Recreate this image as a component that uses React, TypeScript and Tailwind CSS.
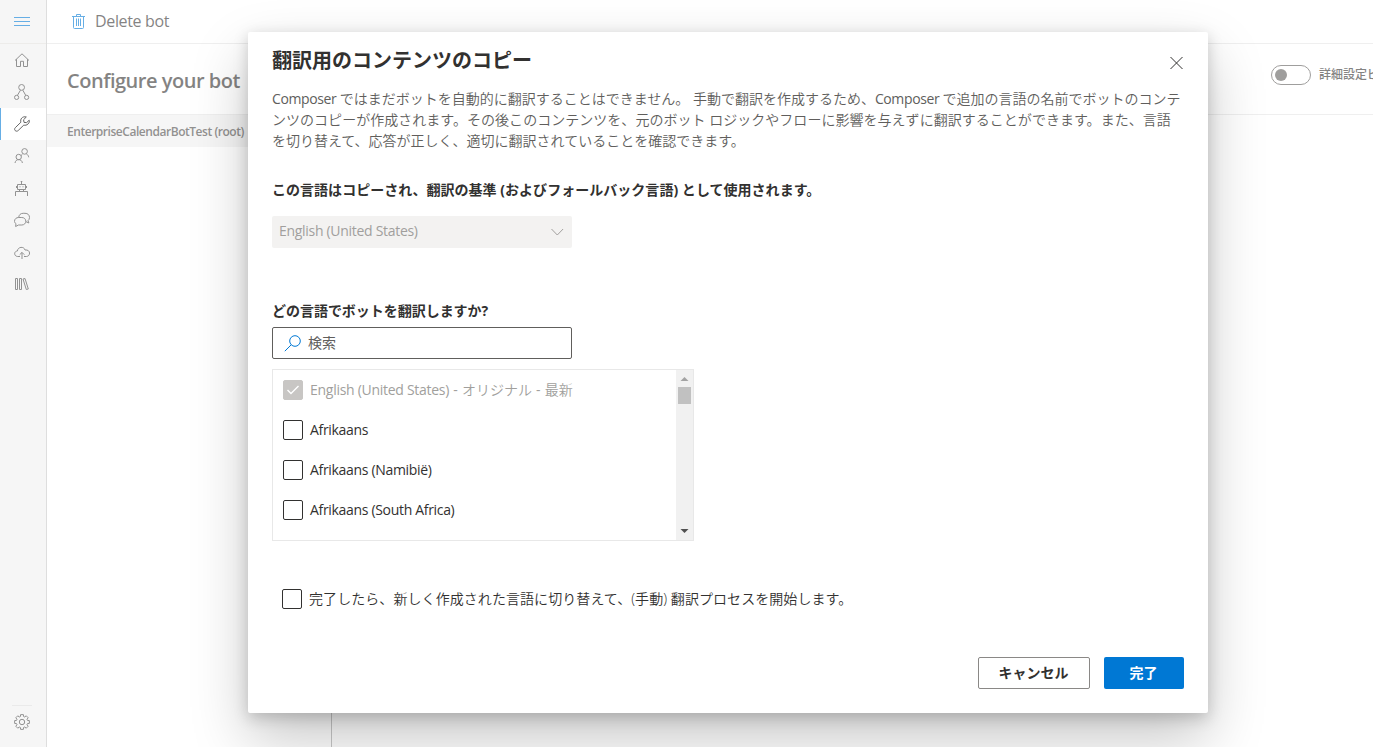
import { useState, type ReactNode } from 'react'
import clsx from 'clsx'

const UI_FONT = "font-['Open_Sans','Noto_Sans_CJK_JP',sans-serif]"

function Icon({ children, className, size = 16 }: { children: ReactNode; className?: string; size?: number }) {
  return (
    <svg
      width={size}
      height={size}
      viewBox={`0 0 ${size} ${size}`}
      fill="none"
      stroke="currentColor"
      strokeWidth={1}
      className={clsx('shrink-0', className)}
      aria-hidden
    >
      {children}
    </svg>
  )
}

type NavItem = { id: string; label: string; drawing: ReactNode }

const NAV: NavItem[] = [
  { id: 'home', label: 'Home', drawing: <path d="M1 8.5 8 1.8l7 6.7M2.5 7.2v7.3h4V9.3h3v5.2h4V7.2" /> },
  {
    id: 'design',
    label: 'Create',
    drawing: <><circle cx="7.6" cy="3.4" r="2.9" /><circle cx="2.6" cy="13.4" r="2.1" /><circle cx="12.6" cy="13.4" r="2.1" /><path d="M6.5 6.2 3.3 11.5M8.8 6.2l3 5.3" /></>,
  },
  {
    id: 'configure',
    label: 'Configure',
    drawing: <path d="M15.2 4.2 12.6 6.6 10 6.4 9.6 3.7 12.3 1C10.4.5 8.8.9 7.7 2.1 6.6 3.3 6.5 4.8 6.9 6.2L1.3 11.7c-.9.9-.9 2.1-.1 2.9.9.8 2.1.8 3-.1L9.8 9.1c1.4.4 3 .1 4.2-1.1 1.3-1.2 1.6-2.5 1.2-3.8Z" />,
  },
  {
    id: 'users',
    label: 'User input',
    drawing: <><circle cx="10.6" cy="3.4" r="2.8" /><circle cx="4.7" cy="9" r="2.7" /><path d="M8.3 6.6 6.9 7.5M12.4 5.9c1.3.7 2.1 1.8 2.3 3.4M1 15c.3-2.2 1.8-3.4 3.7-3.4S8.1 12.8 8.4 15" /></>,
  },
  {
    id: 'bot',
    label: 'Bot responses',
    drawing: <path d="M7.5 1v3M6.7 1.5h1.6M3.5 4.5h8v5h-8zM2.5 6v2M12.5 6v2M5.5 6.8h1M8.5 6.8h1M5.5 9.5v2M9.5 9.5v2M1.5 16v-4.5h12V16" />,
  },
  {
    id: 'chat',
    label: 'Knowledge',
    drawing: <><path d="M4.7 5.5c.2-2.6 1.8-4.2 4.5-4.2h1.8c2.8 0 4.5 1.7 4.5 4.2 0 1.4-.6 2.5-1.5 3.2l.9 2.3-2.9-1.3" /><path d="M1.6 14.5 2 11.7C.9 11 .5 10 .5 9.3.5 7 2.3 5.5 4.6 5.5h3.2c2.4 0 4 1.6 4 3.7s-1.6 3.8-4 3.8H4.5z" /></>,
  },
  { id: 'publish', label: 'Publish', drawing: <path d="M6 12.5H3.7c-4-.2-4-5.3-.3-5.5C3.7 2.7 10 2 11 6c5.8-.8 5.8 6.2 1.5 6.5H10M8 15V8.500M5.7 10.7 8 8.4l2.3 2.3" /> },
  { id: 'library', label: 'Package manager', drawing: <path d="M1.5 2.5h2v11h-2zM5.5 2.5h2v11h-2zM9 3l2-.5 3.3 10.5-2 .5z" /> },
]

// Eight-toothed gear outline
function gearPath(cx: number, cy: number) {
  const pts: string[] = []
  for (let i = 0; i < 8; i++) {
    const base = (i * Math.PI) / 4
    const steps: [number, number][] = [[-0.28, 5.7], [-0.19, 7.5], [0.19, 7.5], [0.28, 5.7]]
    for (const [da, r] of steps) {
      pts.push(`${(cx + r * Math.cos(base + da)).toFixed(2)} ${(cy + r * Math.sin(base + da)).toFixed(2)}`)
    }
  }
  return `M${pts.join('L')}Z`
}

function Sidebar() {
  return (
    <nav className="flex w-[47px] shrink-0 flex-col border-r border-[#c8c8c8] bg-[#f0f0f0] text-[#4a4a4a]">
      <button type="button" aria-label="Menu" className="flex h-[44px] items-center border-b border-[#e1dfdd] pl-3.5 text-[#0078d4]">
        <Icon><path d="M0 3.5h16M0 7.5h16M0 11.5h16" /></Icon>
      </button>
      {NAV.map((item) => (
        <button
          key={item.id}
          type="button"
          aria-label={item.label}
          className={clsx(
            'flex h-8 items-center border-l pl-[13px]',
            item.id === 'configure' ? 'border-[#0078d4] bg-white text-black' : 'border-transparent',
          )}
        >
          <Icon>{item.drawing}</Icon>
        </button>
      ))}
      <div className="mt-auto ml-3 h-px w-5 bg-[#dcdcdc]" />
      <button type="button" aria-label="Settings" className="mb-[9px] flex h-8 items-center pl-3.5">
        <Icon><path d={gearPath(8, 8)} /><circle cx="8" cy="8" r="2.7" /></Icon>
      </button>
    </nav>
  )
}

function Page() {
  return (
    <div className="flex h-[747px] w-[1373px] overflow-hidden bg-white">
      <Sidebar />
      <main className="flex min-w-0 flex-1 flex-col text-[#323130]">
        <div className="flex h-[44px] items-center border-b border-[#e4e4e4] pl-6">
          <Icon className="mb-0.5 text-[#0078d4]">
            <path d="M1 3.5h13M5.5 3.5v-2h4v2M2.5 3.5v11q0 1 1 1h8q1 0 1-1v-11M5.5 5.5v7.5M7.5 5.5v7.5M9.5 5.5v7.5" />
          </Icon>
          <span className="mb-0.5 ml-2 text-[16px] tracking-[-0.34px]">Delete bot</span>
        </div>
        <div className="flex h-[71px] items-start justify-between border-b border-[#e4e4e4] pl-5">
          <h1 className="mt-[21px] text-[20px] leading-8 font-semibold tracking-[-0.48px] whitespace-nowrap">Configure your bot</h1>
          <div className="mt-[21px] flex w-[102px] items-center overflow-hidden">
            <span className="flex h-5 w-10 shrink-0 items-center rounded-full border border-[#605e5c] pl-[3px]">
              <span className="size-3 rounded-full bg-[#605e5c]" />
            </span>
            <span className="ml-2 text-[12px] leading-5 font-medium whitespace-nowrap">詳細設定ビ</span>
          </div>
        </div>
        <div className="flex flex-1">
          <div className="w-[285px] border-r border-[#a6a6a6]">
            <div className="flex h-8 items-center bg-[#f0f0f0] pt-0.5 pl-5 text-[12px] font-semibold tracking-[-0.46px] text-[#4a4846]">
              EnterpriseCalendarBotTest (root)
            </div>
          </div>
        </div>
      </main>
    </div>
  )
}

function Checkbox({ checked, disabled, onChange, children }: {
  checked: boolean
  disabled?: boolean
  onChange?: () => void
  children: ReactNode
}) {
  return (
    <button
      type="button"
      role="checkbox"
      aria-checked={checked}
      disabled={disabled}
      onClick={onChange}
      className={clsx('flex h-5 items-center text-[14px] leading-5 whitespace-nowrap', disabled ? 'text-[#a19f9d]' : 'text-[#323130]')}
    >
      <span
        className={clsx(
          'mr-[7px] flex size-5 shrink-0 items-center justify-center rounded-[2px] border',
          disabled ? 'border-[#c8c6c4] bg-[#c8c6c4]' : 'border-[#323130] bg-white',
        )}
      >
        {checked && (
          <Icon className={disabled ? 'text-white' : 'text-[#323130]'}>
            <path d="m2.5 8 3.5 3.5L13.5 4" strokeWidth={1.4} />
          </Icon>
        )}
      </span>
      <span>{children}</span>
    </button>
  )
}

const LANGUAGES = ['Afrikaans', 'Afrikaans (Namibië)', 'Afrikaans (South Africa)']

function LanguageList() {
  const [picked, setPicked] = useState<string[]>([])
  const toggle = (name: string) =>
    setPicked((p) => (p.includes(name) ? p.filter((n) => n !== name) : [...p, name]))

  return (
    <div className="mt-2.5 flex h-[172px] w-[422px] border border-[#e8e8e8]">
      <div className="flex flex-1 flex-col gap-5 overflow-hidden pt-2.5 pl-2.5">
        <Checkbox checked disabled>
          <span className="tracking-[-0.28px]">English (United States)</span>
          <span className="tracking-[0.4px]"> - </span>
          <span className="font-[350]">オリジナル</span>
          <span className="tracking-[0.3px]"> - </span>
          <span className="font-[350]">最新</span>
        </Checkbox>
        {LANGUAGES.map((name) => (
          <Checkbox key={name} checked={picked.includes(name)} onChange={() => toggle(name)}>
            <span className="tracking-[-0.32px]">{name}</span>
          </Checkbox>
        ))}
      </div>
      {/* Scrollbar */}
      <div className="flex w-[17px] flex-col items-center bg-[#f1f1f1]">
        <svg width="17" height="17" viewBox="0 0 17 17" className="shrink-0" aria-hidden><path d="M4.5 11h8l-4-4z" fill="#a3a3a3" /></svg>
        <div className="h-[17px] w-[13px] bg-[#c1c1c1]" />
        <svg width="17" height="17" viewBox="0 0 17 17" className="mt-auto mb-px shrink-0" aria-hidden><path d="M4.5 7h8l-4 4z" fill="#505050" /></svg>
      </div>
    </div>
  )
}

function CopyDialog() {
  const [switchAfter, setSwitchAfter] = useState(false)

  return (
    <div
      role="dialog"
      aria-modal="true"
      className="flex h-[681px] w-[960px] flex-col rounded-[2px] bg-white px-6 text-[#323130] shadow-[0_25.6px_57.6px_rgba(0,0,0,0.22),0_4.8px_14.4px_rgba(0,0,0,0.18)]"
    >
      <div className="flex h-14 justify-between">
        <h2 className="mt-[15px] text-[20px] leading-7 font-bold">翻訳用のコンテンツのコピー</h2>
        <button type="button" aria-label="Close" className="mt-[23px] size-4 text-[#323130]">
          <Icon><path d="m2.5 2 12 12M14.5 2l-12 12" /></Icon>
        </button>
      </div>
      <div className="text-[14px] leading-[21px] font-[350] whitespace-nowrap text-[#605e5c]">
        <p><span className="font-normal tracking-[-0.38px]">Composer </span>ではまだボットを自動的に翻訳することはできません。 手動で翻訳を作成するため、<span className="font-normal tracking-[-0.38px]">Composer </span>で追加の言語の名前でボットのコンテ</p>
        <p className="tracking-[0.03px]">ンツのコピーが作成されます。その後このコンテンツを、元のボット ロジックやフローに影響を与えずに翻訳することができます。また、言語</p>
        <p>を切り替えて、応答が正しく、適切に翻訳されていることを確認できます。</p>
      </div>

      <div className="mt-[29px] text-[14px] leading-5 font-bold tracking-[0.03px] whitespace-nowrap">この言語はコピーされ、翻訳の基準 (およびフォールバック言語) として使用されます。</div>
      <div className="mt-4 flex h-8 w-[300px] items-center justify-between rounded-[2px] bg-[#f3f2f1] pr-2 pl-[7px] text-[14px] text-[#a19f9d]">
        <span className="mb-[3px] tracking-[-0.3px]">English (United States)</span>
        <Icon size={14}><path d="m1.5 4 5.8 6 5.8-6" /></Icon>
      </div>

      <div className="mt-[53px] text-[14px] leading-5 font-bold tracking-[-0.03px]">どの言語でボットを翻訳しますか?</div>
      <div className="mt-1.5 flex h-8 w-[300px] items-center rounded-[2px] border border-[#605e5c] pl-[11px] text-[14px] text-[#605e5c]">
        <Icon className="mr-[7px] text-[#0078d4]" size={17}><circle cx="11" cy="6" r="5.3" /><path d="M7.2 9.8.8 16.2" /></Icon>
        <span className="mb-0.5">検索</span>
      </div>
      <LanguageList />

      <div className="mt-12 ml-2.5">
        <Checkbox checked={switchAfter} onChange={() => setSwitchAfter((v) => !v)}>
          <span className="font-[350] tracking-[0.07px]">完了したら、新しく作成された言語に切り替えて、(手動) 翻訳プロセスを開始します。</span>
        </Checkbox>
      </div>

      <div className="mt-auto mb-6 flex justify-end gap-3.5 text-[14px] font-bold">
        <button type="button" className="h-8 w-[112px] rounded-[2px] border border-[#8a8886] pr-px pb-0.5">キャンセル</button>
        <button type="button" className="h-8 w-20 rounded-[2px] bg-[#0078d4] pr-px pb-0.5 text-white">完了</button>
      </div>
    </div>
  )
}

export default function App() {
  return (
    <div className={clsx('relative h-[747px] w-[1373px] overflow-hidden', UI_FONT)}>
      <Page />
      {/* Light overlay behind the dialog */}
      <div className="absolute inset-0 bg-white/40 pt-8 pl-[248px]">
        <CopyDialog />
      </div>
    </div>
  )
}
